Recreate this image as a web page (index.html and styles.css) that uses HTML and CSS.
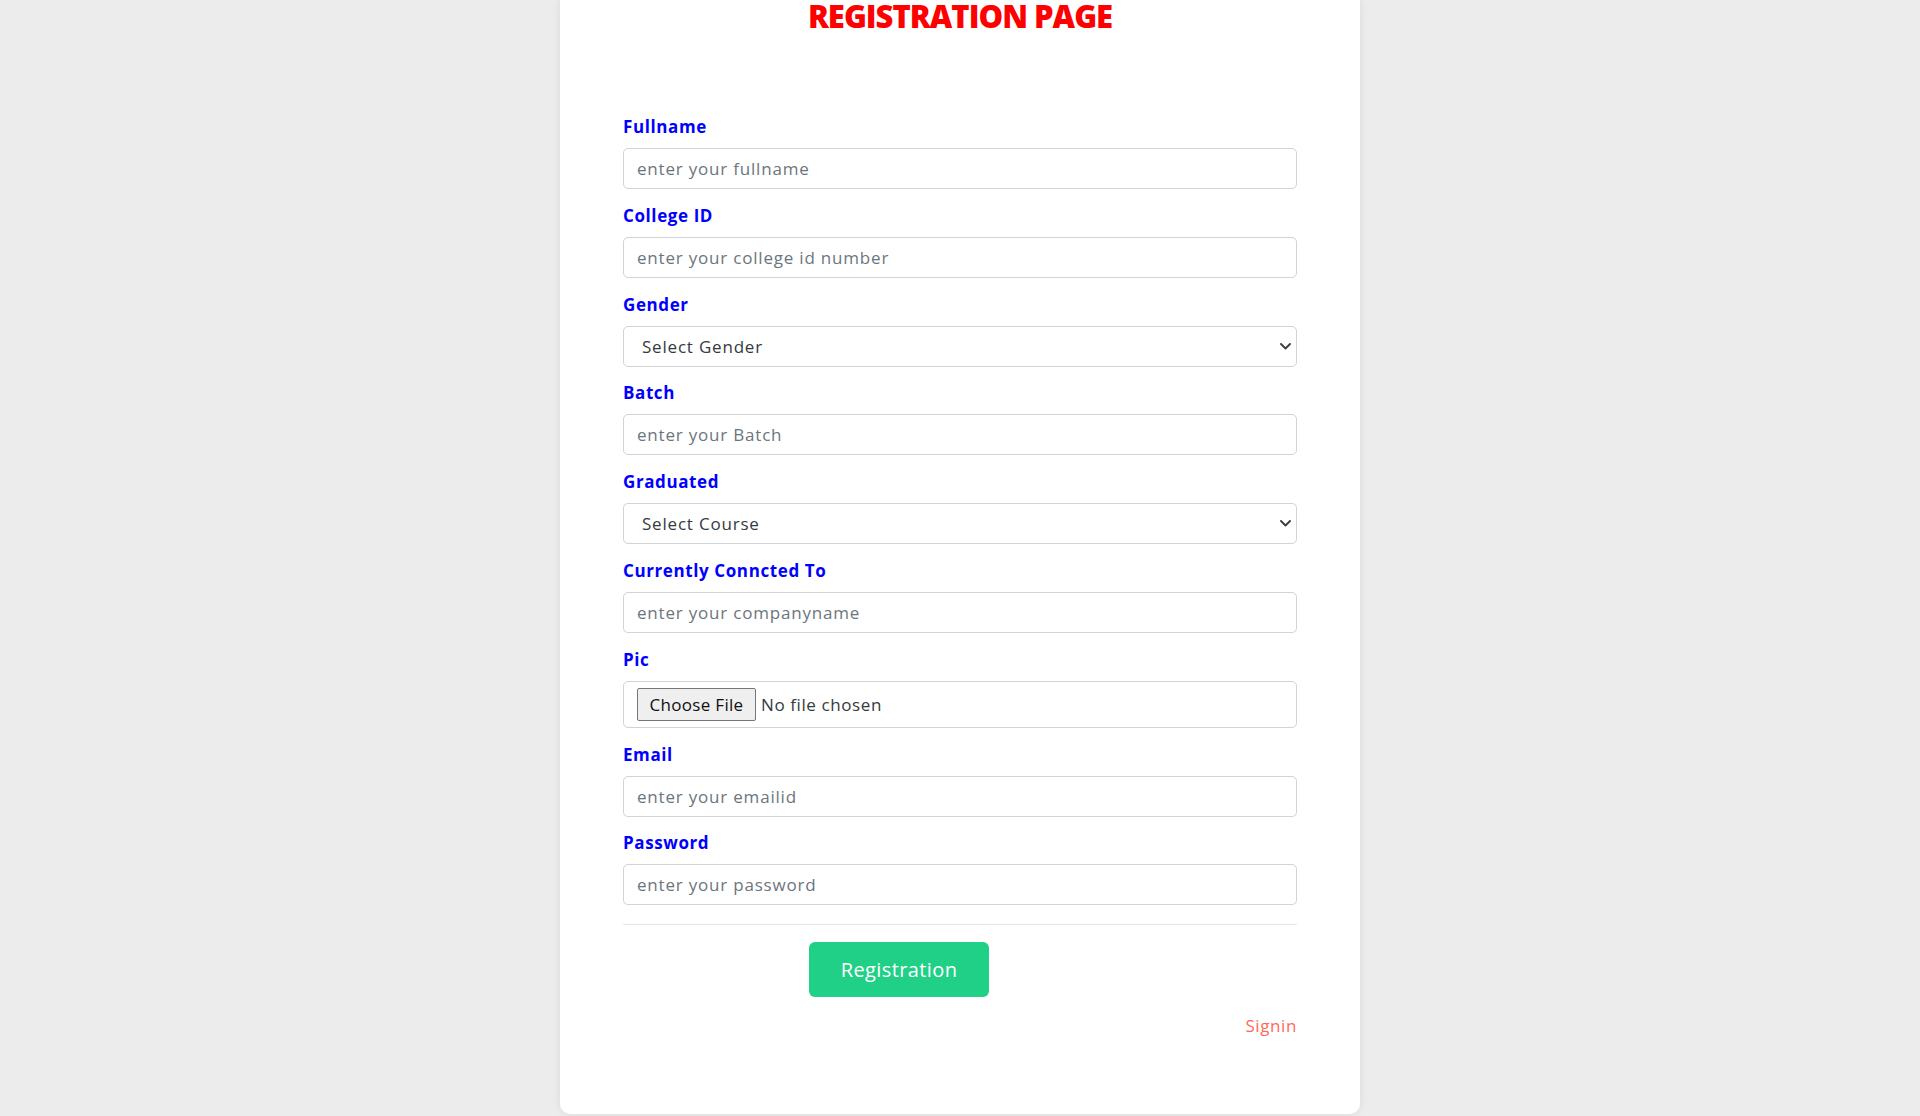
FILE: index.html
```html
<!DOCTYPE html>
<html lang="en">
<head>
<meta charset="utf-8">
<title>Registration Page</title>
<link rel="stylesheet" href="styles.css">
</head>
<body>
<main class="card">
  <h1 class="title">REGISTRATION PAGE</h1>
  <form class="form">
    <div class="field">
      <label class="label" for="fullname">Fullname</label>
      <input class="control" id="fullname" type="text" placeholder="enter your fullname">
    </div>
    <div class="field">
      <label class="label" for="collegeid">College ID</label>
      <input class="control" id="collegeid" type="text" placeholder="enter your college id number">
    </div>
    <div class="field">
      <label class="label" for="gender">Gender</label>
      <div class="select-wrap">
        <select class="control select" id="gender">
          <option>Select Gender</option>
          <option>Male</option>
          <option>Female</option>
        </select>
        <svg class="chevron" width="11" height="7" viewBox="0 0 11 7"><polyline points="1,1 5.5,5.5 10,1" fill="none" stroke="#3a3f44" stroke-width="1.9" stroke-linecap="round" stroke-linejoin="round"/></svg>
      </div>
    </div>
    <div class="field">
      <label class="label" for="batch">Batch</label>
      <input class="control" id="batch" type="text" placeholder="enter your Batch">
    </div>
    <div class="field">
      <label class="label" for="course">Graduated</label>
      <div class="select-wrap">
        <select class="control select" id="course">
          <option>Select Course</option>
        </select>
        <svg class="chevron" width="11" height="7" viewBox="0 0 11 7"><polyline points="1,1 5.5,5.5 10,1" fill="none" stroke="#3a3f44" stroke-width="1.9" stroke-linecap="round" stroke-linejoin="round"/></svg>
      </div>
    </div>
    <div class="field">
      <label class="label" for="company">Currently Conncted To</label>
      <input class="control" id="company" type="text" placeholder="enter your companyname">
    </div>
    <div class="field">
      <label class="label" for="pic">Pic</label>
      <div class="file-box">
        <span class="file-btn">Choose File</span>
        <span class="file-text">No file chosen</span>
      </div>
    </div>
    <div class="field">
      <label class="label" for="email">Email</label>
      <input class="control" id="email" type="email" placeholder="enter your emailid">
    </div>
    <div class="field">
      <label class="label" for="password">Password</label>
      <input class="control" id="password" type="password" placeholder="enter your password">
    </div>
    <hr class="divider">
    <div class="actions">
      <button class="submit" type="button">Registration</button>
    </div>
    <div class="signin-row">
      <a class="signin" href="#">Signin</a>
    </div>
  </form>
</main>
</body>
</html>
```

FILE: styles.css
```css
html, body {
  margin: 0;
  padding: 0;
}
body {
  background: #ececec;
  font-family: "Open Sans", "Noto Sans", sans-serif;
  height: 1116px;
  overflow: hidden;
}
.card {
  box-sizing: border-box;
  width: 800px;
  height: 1114px;
  margin: 0 auto;
  padding: 0 63px 0 63px;
  background: #fff;
  border-radius: 0 0 10px 10px;
  box-shadow: 0 0 8px rgba(0, 0, 0, 0.08);
}
.title {
  margin: 0;
  padding-top: 1px;
  font-size: 31px;
  line-height: 31px;
  font-weight: 800;
  color: #ff0000;
  text-align: center;
  letter-spacing: -1px;
}
.form {
  margin-top: 83px;
  display: flex;
  flex-direction: column;
}
.field {
  display: flex;
  flex-direction: column;
  margin-bottom: 14.8px;
}
.label {
  font-size: 17px;
  line-height: 24px;
  font-weight: 700;
  color: #0000ff;
  letter-spacing: 0.6px;
  margin-bottom: 9px;
}
.control {
  box-sizing: border-box;
  width: 100%;
  height: 41px;
  padding: 0 13px;
  border: 1px solid #ced4da;
  border-radius: 5px;
  background: #fff;
  font-family: inherit;
  font-size: 17px;
  letter-spacing: 0.8px;
  color: #212529;
  outline: none;
}
.control::placeholder {
  color: #6c757d;
}
.select-wrap {
  position: relative;
}
.select {
  appearance: none;
  -webkit-appearance: none;
  padding-left: 18px;
  color: #343a40;
}
.chevron {
  position: absolute;
  right: 6px;
  top: 17px;
  pointer-events: none;
}
.file-box {
  box-sizing: border-box;
  height: 47px;
  display: flex;
  align-items: center;
  padding: 0 13px;
  border: 1px solid #ced4da;
  border-radius: 5px;
  font-size: 17px;
}
.file-btn {
  box-sizing: border-box;
  height: 33px;
  width: 119px;
  display: flex;
  align-items: center;
  justify-content: center;
  background: #efefef;
  border: 1px solid #767676;
  border-radius: 2px;
  color: #111;
  letter-spacing: 0.3px;
}
.file-text {
  margin-left: 5px;
  color: #343a40;
  letter-spacing: 0.6px;
}
.divider {
  margin: 4px 0 0 0;
  border: 0;
  border-top: 1px solid #e6e6e6;
  height: 0;
}
.actions {
  display: flex;
  margin-top: 17px;
}
.submit {
  margin-left: 186px;
  width: 180px;
  height: 55px;
  border: 0;
  border-radius: 6px;
  background: #20d087;
  color: #fff;
  font-family: inherit;
  font-size: 20px;
  letter-spacing: 0.4px;
}
.signin-row {
  display: flex;
  justify-content: flex-end;
  margin-top: 17px;
}
.signin {
  font-size: 17px;
  line-height: 24px;
  color: #ff6a5a;
  letter-spacing: 0.6px;
  text-decoration: none;
}
```
